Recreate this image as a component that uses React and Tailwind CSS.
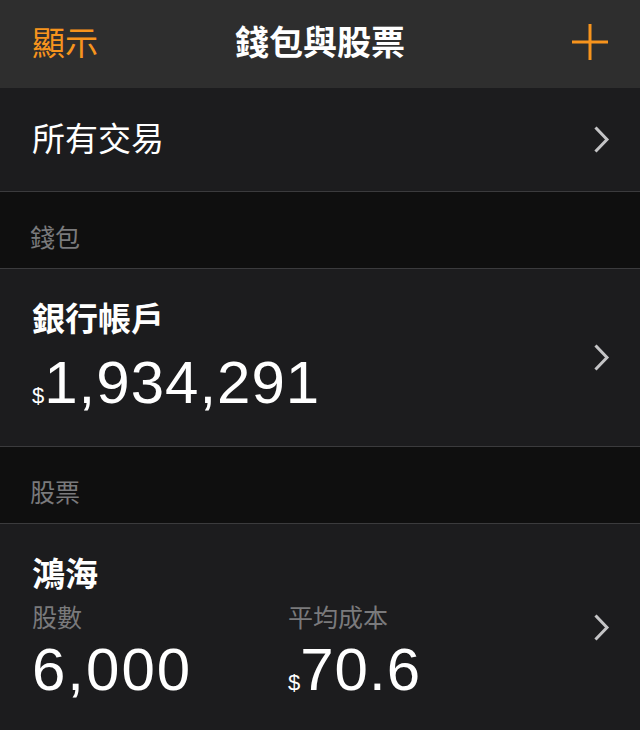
const font = { fontFamily: '"Liberation Sans", "Noto Sans CJK TC", sans-serif' };

function Chevron() {
  return (
    <svg width="16" height="27" viewBox="0 0 16 27" className="shrink-0">
      <polyline points="2.5,2.5 13,13.5 2.5,24.5" fill="none" stroke="#c4c4c6" strokeWidth="3" strokeLinecap="square" />
    </svg>
  );
}

function Plus() {
  return (
    <svg width="36" height="36" viewBox="0 0 36 36">
      <line x1="18" y1="0" x2="18" y2="36" stroke="#f7941d" strokeWidth="3" />
      <line x1="0" y1="18" x2="36" y2="18" stroke="#f7941d" strokeWidth="3" />
    </svg>
  );
}

function Section({ title }) {
  return (
    <div className="h-[77px] bg-[#0f0f0f] border-b border-[#3b3b3d] flex items-end px-[30px] pb-[17px]">
      <span className="text-[25px] leading-[25px] text-[#7a7a7c]">{title}</span>
    </div>
  );
}

function Money({ value, className = "" }) {
  return (
    <div className={"flex items-baseline text-white " + className}>
      <span className="text-[22px] leading-[22px]">$</span>
      <span className="text-[60px] leading-[60px] tracking-[1px]">{value}</span>
    </div>
  );
}

export default function App() {
  return (
    <div style={font} className="w-[640px] h-[730px] overflow-hidden bg-[#1c1c1e] text-white">
      <div className="h-[88px] bg-[#2e2e2e] flex items-center px-[32px]">
        <div className="w-[120px] text-[33px] leading-[33px] text-[#f7941d] -mt-[2px]">顯示</div>
        <div className="flex-1 text-center text-[34px] leading-[34px] font-semibold -mt-[2px]">錢包與股票</div>
        <div className="w-[120px] flex justify-end -mt-[4px]">
          <Plus />
        </div>
      </div>

      <div className="h-[104px] border-b border-[#3b3b3d] flex items-center justify-between pl-[32px] pr-[30px]">
        <span className="text-[33px] leading-[33px]">所有交易</span>
        <Chevron />
      </div>

      <Section title="錢包" />

      <div className="h-[178px] border-b border-[#3b3b3d] flex items-center justify-between pl-[32px] pr-[30px]">
        <div className="flex flex-col pt-[1px]">
          <span className="text-[33px] leading-[33px] font-semibold">銀行帳戶</span>
          <Money value="1,934,291" className="mt-[17px]" />
        </div>
        <Chevron />
      </div>

      <Section title="股票" />

      <div className="h-[206px] flex items-center justify-between pl-[32px] pr-[30px]">
        <div className="flex flex-col pt-[4px]">
          <span className="text-[33px] leading-[33px] font-semibold">鴻海</span>
          <div className="flex mt-[15px]">
            <div className="w-[256px] flex flex-col">
              <span className="text-[25px] leading-[25px] text-[#7a7a7c]">股數</span>
              <span className="text-[60px] leading-[60px] tracking-[2px] mt-[9px]">6,000</span>
            </div>
            <div className="flex flex-col">
              <span className="text-[25px] leading-[25px] text-[#7a7a7c]">平均成本</span>
              <Money value="70.6" className="mt-[9px]" />
            </div>
          </div>
        </div>
        <Chevron />
      </div>
    </div>
  );
}
